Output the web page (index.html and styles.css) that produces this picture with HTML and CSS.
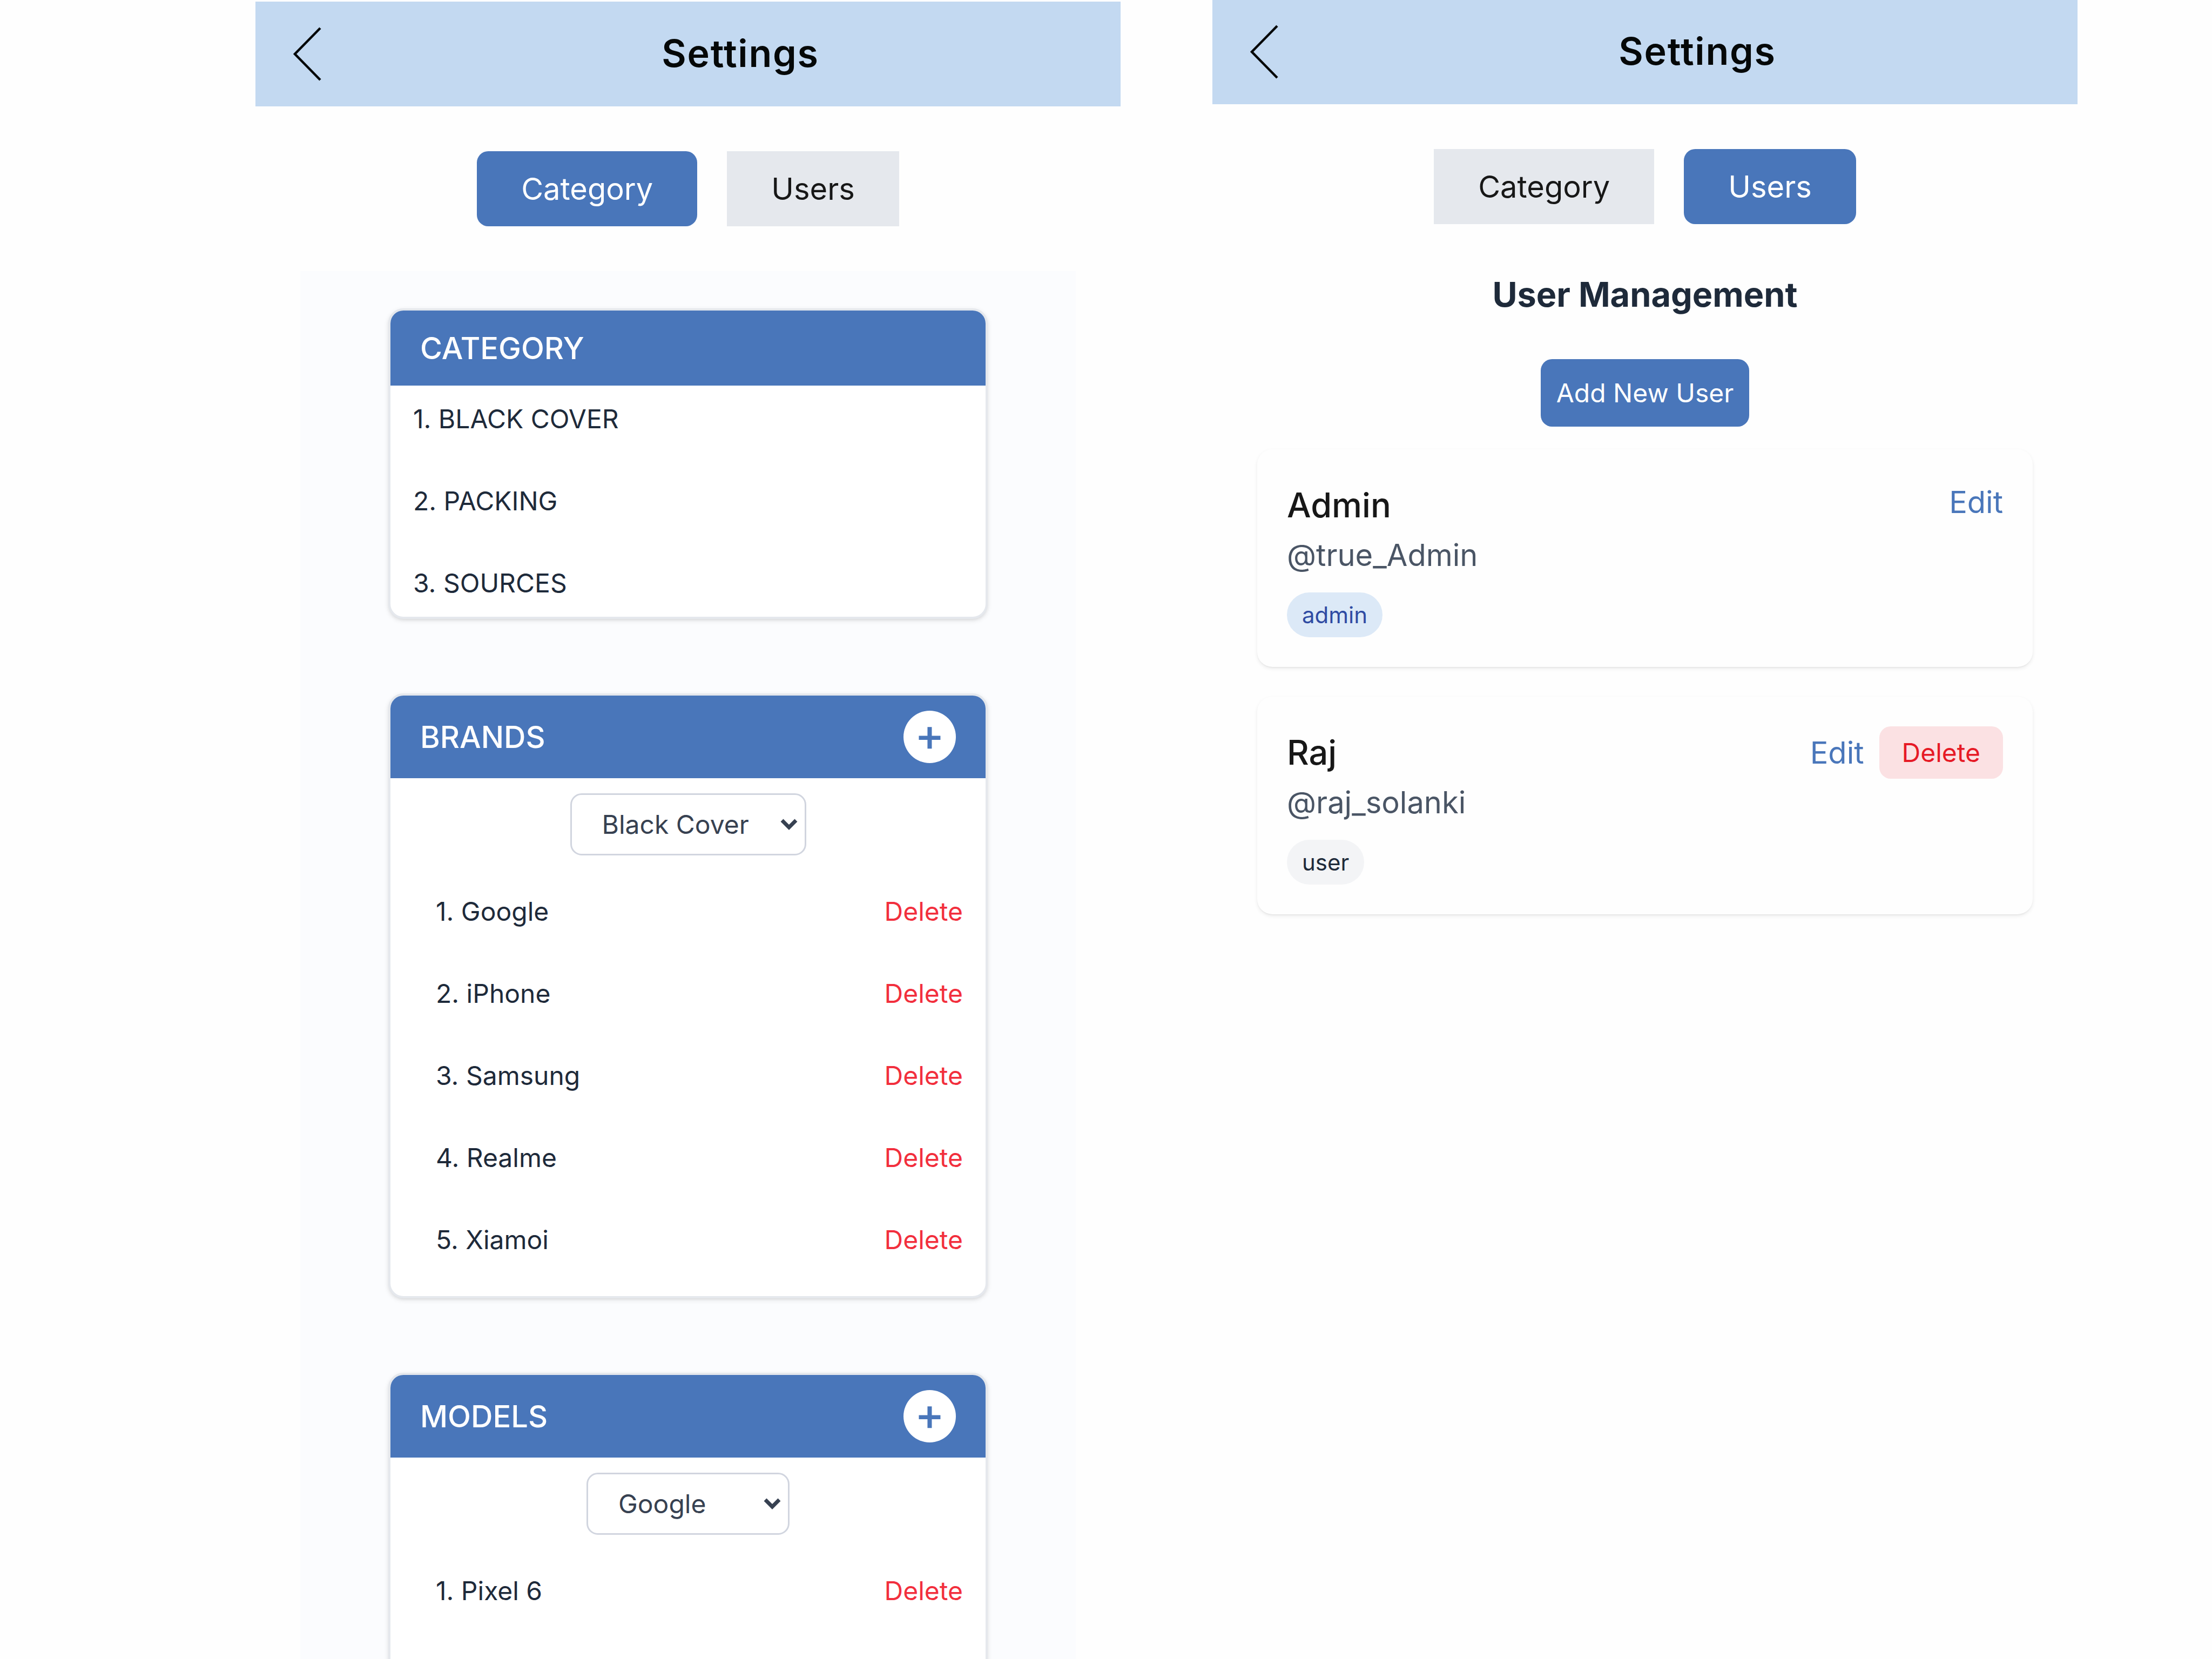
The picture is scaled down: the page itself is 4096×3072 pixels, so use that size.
FILE: index.html
```html
<!DOCTYPE html>
<html lang="en">
<head>
<meta charset="utf-8">
<title>Settings</title>
<link rel="stylesheet" href="styles.css">
</head>
<body>
<main class="board">
  <section class="screen screen-category" aria-label="Category settings">
    <header class="topbar">
      <button class="back" type="button" aria-label="Back">
        <svg class="back-icon" viewBox="0 0 54 100" aria-hidden="true"><path d="M51 2 4 50l47 48" fill="none" stroke="currentColor" stroke-width="4.5"/></svg>
      </button>
      <h1 class="title">Settings</h1>
    </header>
    <nav class="tabs">
      <button class="tab tab-active" type="button">Category</button>
      <button class="tab" type="button">Users</button>
    </nav>
    <div class="panel">
      <section class="card">
        <div class="card-head"><h2 class="card-title">CATEGORY</h2></div>
        <ul class="rows">
          <li class="row">1. BLACK COVER</li>
          <li class="row">2. PACKING</li>
          <li class="row">3. SOURCES</li>
        </ul>
      </section>
      <section class="card">
        <div class="card-head card-head-tall">
          <h2 class="card-title">BRANDS</h2>
          <button class="add" type="button" aria-label="Add brand">+</button>
        </div>
        <div class="picker">
          <select class="select" aria-label="Category">
            <option>Black Cover</option>
            <option>Packing</option>
            <option>Sources</option>
          </select>
          <svg class="caret" viewBox="0 0 32 21" aria-hidden="true"><path d="M3 3l13 13L29 3" fill="none" stroke="currentColor" stroke-width="7"/></svg>
        </div>
        <ul class="rows rows-inset">
          <li class="row row-inset">1. Google <button class="remove" type="button">Delete</button></li>
          <li class="row row-inset">2. iPhone <button class="remove" type="button">Delete</button></li>
          <li class="row row-inset">3. Samsung <button class="remove" type="button">Delete</button></li>
          <li class="row row-inset">4. Realme <button class="remove" type="button">Delete</button></li>
          <li class="row row-inset">5. Xiamoi <button class="remove" type="button">Delete</button></li>
        </ul>
      </section>
      <section class="card">
        <div class="card-head card-head-tall">
          <h2 class="card-title">MODELS</h2>
          <button class="add" type="button" aria-label="Add model">+</button>
        </div>
        <div class="picker">
          <select class="select" aria-label="Brand">
            <option>Google</option>
            <option>iPhone</option>
            <option>Samsung</option>
            <option>Realme</option>
            <option>Xiamoi</option>
          </select>
          <svg class="caret" viewBox="0 0 32 21" aria-hidden="true"><path d="M3 3l13 13L29 3" fill="none" stroke="currentColor" stroke-width="7"/></svg>
        </div>
        <ul class="rows rows-inset rows-open">
          <li class="row row-inset">1. Pixel 6 <button class="remove" type="button">Delete</button></li>
        </ul>
      </section>
    </div>
  </section>

  <section class="screen screen-users" aria-label="User settings">
    <header class="topbar">
      <button class="back" type="button" aria-label="Back">
        <svg class="back-icon" viewBox="0 0 54 100" aria-hidden="true"><path d="M51 2 4 50l47 48" fill="none" stroke="currentColor" stroke-width="4.5"/></svg>
      </button>
      <h1 class="title">Settings</h1>
    </header>
    <nav class="tabs">
      <button class="tab" type="button">Category</button>
      <button class="tab tab-active" type="button">Users</button>
    </nav>
    <div class="users">
      <h2 class="users-title">User Management</h2>
      <button class="new-user" type="button">Add New User</button>
      <div class="user-list">
        <article class="user">
          <div class="user-info">
            <h3 class="user-name">Admin</h3>
            <p class="user-handle">@true_Admin</p>
            <span class="badge badge-admin">admin</span>
          </div>
          <div class="user-actions">
            <button class="edit" type="button">Edit</button>
          </div>
        </article>
        <article class="user">
          <div class="user-info">
            <h3 class="user-name">Raj</h3>
            <p class="user-handle">@raj_solanki</p>
            <span class="badge">user</span>
          </div>
          <div class="user-actions">
            <button class="edit" type="button">Edit</button>
            <button class="delete-user" type="button">Delete</button>
          </div>
        </article>
      </div>
    </div>
  </section>
</main>
</body>
</html>
```

FILE: styles.css
```css
:root {
  --blue: #4976ba;
  --line: #e5e8ed;
  --ink: #1e2a3a;
}

* { box-sizing: border-box; }

body {
  margin: 0;
  background: #fefefe;
  color: #171717;
  font-family: Inter, "Liberation Sans", sans-serif;
  font-size: 56px;
}

h1, h2, h3, p, ul { margin: 0; padding: 0; }
ul { list-style: none; }

button {
  margin: 0;
  padding: 0;
  border: 0;
  background: none;
  color: inherit;
  font: inherit;
  cursor: pointer;
}

/* Two phone-width screens side by side */
.board {
  display: grid;
  grid-template-columns: 473fr 1602fr 170fr 1602fr 249fr;
  height: 100vh;
  overflow: hidden;
}
.screen-category { grid-column: 2; padding-top: 3px; }
.screen-users { grid-column: 4; margin-top: -1px; }

.topbar {
  display: flex;
  align-items: center;
  height: 194px;
  padding: 0 55px;
  background: #c3d9f1;
  color: #050808;
}
.back {
  display: flex;
  width: 194px;
  padding-left: 14px;
}
.back-icon { width: 54px; height: 100px; }
.title {
  flex: 1;
  padding-bottom: 3px;
  text-align: center;
  font-size: 70px;
  font-weight: 600;
  letter-spacing: 0.025em;
}

.tabs {
  display: flex;
  justify-content: center;
  gap: 55px;
  padding: 83px;
}
.tab {
  height: 139px;
  padding: 0 82px;
  background: var(--line);
}
.tab-active {
  border-radius: 21px;
  background: var(--blue);
  color: #fff;
}

/* Category screen */
.panel {
  display: flex;
  flex-direction: column;
  gap: 138px;
  margin: 0 83px;
  padding: 69px 163px;
  background: #fbfcfe;
}
.card {
  overflow: hidden;
  border: 4px solid var(--line);
  border-radius: 28px;
  background: #fff;
  box-shadow: 0 3px 10px rgba(0, 0, 0, 0.1), 0 3px 7px -3px rgba(0, 0, 0, 0.1);
}
.card-head {
  display: flex;
  align-items: center;
  justify-content: space-between;
  height: 139px;
  padding: 0 55px;
  background: var(--blue);
  color: #fff;
}
.card-head-tall { height: 153px; }
.card-title { font-size: 56px; font-weight: 500; }
.add {
  display: flex;
  align-items: center;
  justify-content: center;
  width: 97px;
  height: 97px;
  padding-bottom: 8px;
  border-radius: 50%;
  background: #fff;
  color: var(--blue);
  font-size: 83px;
  font-weight: 500;
  line-height: 83px;
}

.picker {
  display: grid;
  width: max-content;
  margin: 28px auto 0;
  align-items: center;
  color: #374151;
}
.select {
  grid-area: 1 / 1;
  height: 115px;
  padding: 0 102px 0 56px;
  border: 3px solid #d1d5df;
  border-radius: 21px;
  appearance: none;
  background: #fff;
  color: inherit;
  font: inherit;
  font-size: 48px;
}
.caret {
  grid-area: 1 / 1;
  justify-self: end;
  width: 32px;
  height: 21px;
  margin-right: 16px;
  pointer-events: none;
}

.rows {
  display: grid;
  gap: 28px;
  color: var(--ink);
  font-size: 48px;
  line-height: 68px;
}
.row {
  display: flex;
  justify-content: space-between;
  padding: 28px 42px;
}
.rows-inset { padding: 42px; }
.row-inset { padding-right: 0; }
.rows-open { padding-bottom: 194px; }
.remove { color: #f22f3d; }

/* Users screen */
.users {
  display: flex;
  flex-direction: column;
  align-items: center;
  padding: 0 83px;
}
.users-title {
  margin-bottom: 73px;
  color: var(--ink);
  font-size: 63px;
  font-weight: 700;
  line-height: 94px;
}
.new-user {
  height: 125px;
  padding: 0 29px;
  border-radius: 21px;
  background: var(--blue);
  color: #fff;
  font-size: 48px;
}
.user-list {
  display: grid;
  gap: 55px;
  width: 100%;
  margin-top: 42px;
}
.user {
  display: flex;
  align-items: flex-start;
  justify-content: space-between;
  padding: 55px;
  border-radius: 28px;
  background: #fefefe;
  box-shadow: 0 3px 7px rgba(0, 0, 0, 0.08), 0 2px 3px -1px rgba(0, 0, 0, 0.06);
}
.user-info {
  display: flex;
  flex-direction: column;
  align-items: flex-start;
}
.user-name {
  font-size: 63px;
  font-weight: 500;
  line-height: 96px;
}
.user-handle {
  margin-bottom: 24px;
  color: #4a5565;
  line-height: 90px;
}
.badge {
  padding: 0 28px;
  border-radius: 42px;
  background: #f3f4f6;
  color: var(--ink);
  font-size: 42px;
  line-height: 83px;
}
.badge-admin { background: #dce9f7; color: #2f4ba3; }
.user-actions {
  display: flex;
  align-items: center;
  gap: 28px;
}
.edit { color: var(--blue); line-height: 86px; }
.delete-user {
  height: 97px;
  padding: 0 42px;
  border-radius: 21px;
  background: #fbe1e3;
  color: #e61a26;
  font-size: 48px;
}
```
